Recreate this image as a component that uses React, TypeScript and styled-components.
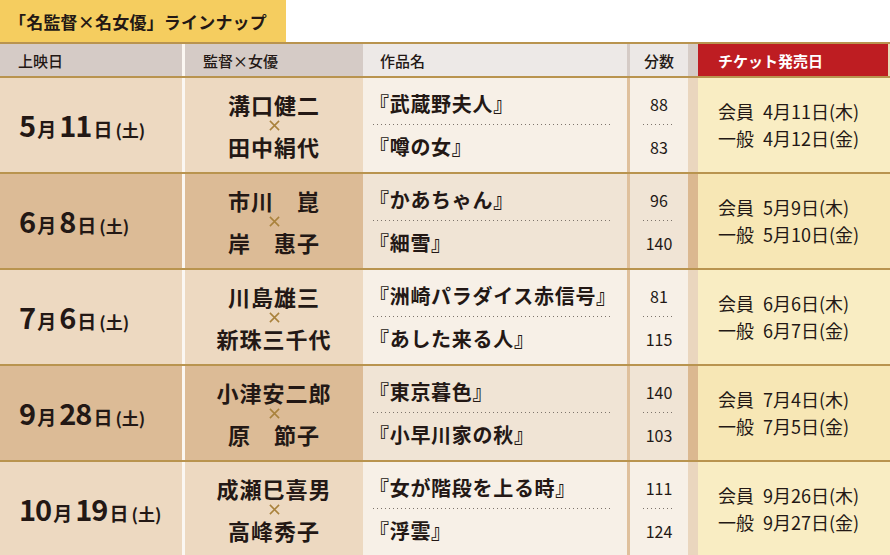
import React from "react"
import styled, { createGlobalStyle, css } from "styled-components"

type Tone = "light" | "dark"

type Screening = {
    month: string;
    day: string;
    director: string;
    actress: string;
    films: [string, string];
    minutes: [string, string];
    member: string;
    general: string;
}

const screenings: Screening[] = [
    { month: "5", day: "11", director: "溝口健二", actress: "田中絹代", films: ["『武蔵野夫人』", "『噂の女』"], minutes: ["88", "83"], member: "4月11日(木)", general: "4月12日(金)" },
    { month: "6", day: "8", director: "市川　崑", actress: "岸　惠子", films: ["『かあちゃん』", "『細雪』"], minutes: ["96", "140"], member: "5月9日(木)", general: "5月10日(金)" },
    { month: "7", day: "6", director: "川島雄三", actress: "新珠三千代", films: ["『洲崎パラダイス赤信号』", "『あした来る人』"], minutes: ["81", "115"], member: "6月6日(木)", general: "6月7日(金)" },
    { month: "9", day: "28", director: "小津安二郎", actress: "原　節子", films: ["『東京暮色』", "『小早川家の秋』"], minutes: ["140", "103"], member: "7月4日(木)", general: "7月5日(金)" },
    { month: "10", day: "19", director: "成瀬巳喜男", actress: "高峰秀子", films: ["『女が階段を上る時』", "『浮雲』"], minutes: ["111", "124"], member: "9月26日(木)", general: "9月27日(金)" },
]

const palette = {
    light: { side: "#edd9c1", film: "#f7f0e7", stripe: "#ead6be", ticket: "#f9edc3" },
    dark: { side: "#dcbb96", film: "#f0e4d5", stripe: "#dbb890", ticket: "#f7e7b5" },
}

const GlobalStyle = createGlobalStyle`
    body {
        margin: 0;
        background: #ffffff;
        font-family: "Noto Sans CJK JP", "Noto Sans", sans-serif;
        color: #231815;
    }
`

// small gold cross between director and actress
const CrossMark = () => (
    <CrossSvg viewBox="0 0 12 12" aria-hidden="true">
        <path d="M1 1 L11 11 M11 1 L1 11" stroke="#a9823c" strokeWidth="1.7" fill="none" />
    </CrossSvg>
)

const App: React.FC = () => {
    return (
        <Wrapper>
            <GlobalStyle />
            <TitleTab>「名監督×名女優」ラインナップ</TitleTab>
            <Table>
                <HeaderRow>
                    <HeadCell $bg="#d5cbc6" $edge="#fbf7f2" $edgeWidth={3}>上映日</HeadCell>
                    <HeadCell $bg="#d5cbc6">監督×女優</HeadCell>
                    <HeadCell $bg="#ede9e7" $edge="#d5cbc6" $edgeWidth={3} $pad={17}>作品名</HeadCell>
                    <HeadCell $bg="#ece8e6" $edge="#d6ccc6" $edgeWidth={10} $center>分数</HeadCell>
                    <TicketHead>チケット発売日</TicketHead>
                </HeaderRow>
                {screenings.map((s, i) => {
                    const tone: Tone = i % 2 === 0 ? "light" : "dark"
                    return (
                        <Row key={s.month + s.day}>
                            <DateCell $tone={tone}>
                                <DateText>
                                    <Num>{s.month}</Num><Unit>月</Unit>
                                    <Num>{s.day}</Num><Unit>日</Unit>
                                    <Weekday>(土)</Weekday>
                                </DateText>
                            </DateCell>
                            <PairCell $tone={tone}>
                                <Name>{s.director}</Name>
                                <CrossMark />
                                <Name>{s.actress}</Name>
                            </PairCell>
                            <FilmCell $tone={tone}>
                                <Film>{s.films[0]}</Film>
                                <Dots />
                                <Film>{s.films[1]}</Film>
                            </FilmCell>
                            <MinutesCell $tone={tone}>
                                <Minute>{s.minutes[0]}</Minute>
                                <ShortDots />
                                <Minute>{s.minutes[1]}</Minute>
                            </MinutesCell>
                            <TicketCell $tone={tone}>
                                <TicketLine><Label>会員</Label>{s.member}</TicketLine>
                                <TicketLine><Label>一般</Label>{s.general}</TicketLine>
                            </TicketCell>
                        </Row>
                    )
                })}
            </Table>
        </Wrapper>
    )
}

const Wrapper = styled.div`
    width: 890px;
    height: 555px;
    overflow: hidden;
`

const TitleTab = styled.div`
    width: 286px;
    height: 42px;
    box-sizing: border-box;
    padding-left: 9px;
    display: flex;
    align-items: center;
    background: #f5cd5f;
    font-size: 17px;
    font-weight: 700;
    letter-spacing: 0.2px;
`

const Table = styled.div`
    border-top: 2px solid #b9944f;
`

const columns = css`
    display: grid;
    grid-template-columns: 185px 178px 267px 68px 1fr;
`

const HeaderRow = styled.div`
    ${columns};
    height: 32px;
    border-bottom: 2px solid #b9944f;
`

const HeadCell = styled.div<{ $bg: string; $edge?: string; $edgeWidth?: number; $pad?: number; $center?: boolean }>`
    display: flex;
    align-items: center;
    justify-content: ${p => p.$center ? "center" : "flex-start"};
    padding-left: ${p => p.$center ? 0 : (p.$pad ?? 18)}px;
    background: ${p => p.$bg};
    border-right: ${p => p.$edge ? `${p.$edgeWidth}px solid ${p.$edge}` : "none"};
    font-size: 15px;
    font-weight: 500;
`

const TicketHead = styled.div`
    display: flex;
    align-items: center;
    padding-left: 20px;
    background: #be1d22;
    border-right: 2px solid #e9d9b8;
    color: #ffffff;
    font-size: 15px;
    font-weight: 700;
`

const Row = styled.div`
    ${columns};
    height: 94px;
    border-bottom: 2px solid #b9944f;
`

const DateCell = styled.div<{ $tone: Tone }>`
    display: flex;
    align-items: center;
    padding: 0 0 2px 19px;
    background: ${p => palette[p.$tone].side};
    border-right: 3px solid #fbf7f2;
`

const DateText = styled.div`
    display: flex;
    align-items: baseline;
    font-weight: 700;
    line-height: 1;
`

const Num = styled.span`
    font-size: 29px;
    letter-spacing: -1px;
    margin-right: 2px;
`

const Unit = styled.span`
    font-size: 19px;
    margin-right: 3px;
`

const Weekday = styled.span`
    font-size: 17px;
`

const PairCell = styled.div<{ $tone: Tone }>`
    display: flex;
    flex-direction: column;
    align-items: center;
    justify-content: center;
    background: ${p => palette[p.$tone].side};
`

const Name = styled.div`
    font-size: 22px;
    font-weight: 700;
    line-height: 23px;
    letter-spacing: 1px;
    white-space: pre;
`

const CrossSvg = styled.svg`
    width: 11px;
    height: 11px;
    margin: 4px 0;
    display: block;
`

const FilmCell = styled.div<{ $tone: Tone }>`
    display: flex;
    flex-direction: column;
    justify-content: center;
    padding: 0 14px 0 6px;
    background: ${p => palette[p.$tone].film};
    border-right: 3px solid #dfc09c;
`

const Film = styled.div`
    font-size: 20px;
    font-weight: 700;
    line-height: 26px;
    letter-spacing: 0.7px;
`

const dotted = css`
    height: 2px;
    margin: 7px 0 8px;
    background: linear-gradient(to right, #7d746c 1.4px, transparent 1.4px) 0 0 / 4px 1.4px repeat-x;
`

const Dots = styled.div`
    ${dotted};
    margin-left: 4px;
`

const MinutesCell = styled.div<{ $tone: Tone }>`
    display: flex;
    flex-direction: column;
    align-items: center;
    justify-content: center;
    background: ${p => palette[p.$tone].film};
    border-right: 10px solid ${p => palette[p.$tone].stripe};
`

const Minute = styled.div`
    font-size: 16px;
    line-height: 26px;
`

const ShortDots = styled.div`
    ${dotted};
    width: 32px;
`

const TicketCell = styled.div<{ $tone: Tone }>`
    display: flex;
    flex-direction: column;
    justify-content: center;
    padding-left: 20px;
    background: ${p => palette[p.$tone].ticket};
`

const TicketLine = styled.div`
    font-size: 18px;
    line-height: 27px;
`

const Label = styled.span`
    margin-right: 9px;
`

export default App
